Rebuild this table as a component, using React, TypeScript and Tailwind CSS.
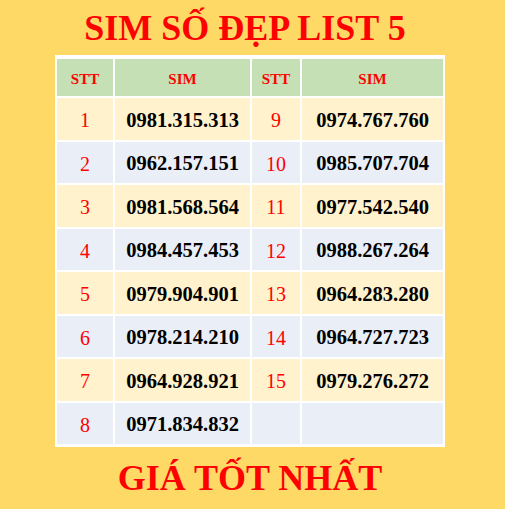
const rows: [string, string, string, string][] = [
  ["1", "0981.315.313", "9", "0974.767.760"],
  ["2", "0962.157.151", "10", "0985.707.704"],
  ["3", "0981.568.564", "11", "0977.542.540"],
  ["4", "0984.457.453", "12", "0988.267.264"],
  ["5", "0979.904.901", "13", "0964.283.280"],
  ["6", "0978.214.210", "14", "0964.727.723"],
  ["7", "0964.928.921", "15", "0979.276.272"],
  ["8", "0971.834.832", "", ""],
];

export default function App() {
  return (
    <div
      className="flex h-[509px] w-[505px] flex-col items-center bg-[#FFD966] pr-[5px]"
      style={{ fontFamily: '"Liberation Serif", "Times New Roman", serif' }}
    >
      {/* Title */}
      <div className="flex h-[55px] items-center justify-center pr-[10px]">
        <h1 className="text-[36px] font-bold leading-none text-[#FF0000]">
          SIM SỐ ĐẸP LIST 5
        </h1>
      </div>

      {/* Table */}
      <div className="grid grid-cols-[56px_135px_48px_141px] gap-[2px] bg-white px-[2px] pt-[4px] pb-[3px]">
        {["STT", "SIM", "STT", "SIM"].map((h, i) => (
          <div
            key={i}
            className="flex h-[37px] items-center justify-center bg-[#C5E0B4] pt-[3px] text-[15px] font-bold text-[#FF0000]"
          >
            {h}
          </div>
        ))}
        {rows.map((r, i) => {
          const bg = i % 2 === 0 ? "bg-[#FFF2CC]" : "bg-[#E9EEF7]";
          return [
            <div
              key={`${i}a`}
              className={`flex h-[41.5px] items-center justify-center pt-[3px] text-[20px] text-[#FF0000] ${bg}`}
            >
              {r[0]}
            </div>,
            <div
              key={`${i}b`}
              className={`flex h-[41.5px] items-center justify-center pt-[3px] text-[20.5px] font-bold text-black ${bg}`}
            >
              {r[1]}
            </div>,
            <div
              key={`${i}c`}
              className={`flex h-[41.5px] items-center justify-center pt-[3px] text-[20px] text-[#FF0000] ${bg}`}
            >
              {r[2]}
            </div>,
            <div
              key={`${i}d`}
              className={`flex h-[41.5px] items-center justify-center pt-[3px] text-[20.5px] font-bold text-black ${bg}`}
            >
              {r[3]}
            </div>,
          ];
        })}
      </div>

      {/* Footer */}
      <div className="flex flex-1 items-center justify-center">
        <h2 className="text-[36px] font-bold leading-none text-[#FF0000]">
          GIÁ TỐT NHẤT
        </h2>
      </div>
    </div>
  );
}
